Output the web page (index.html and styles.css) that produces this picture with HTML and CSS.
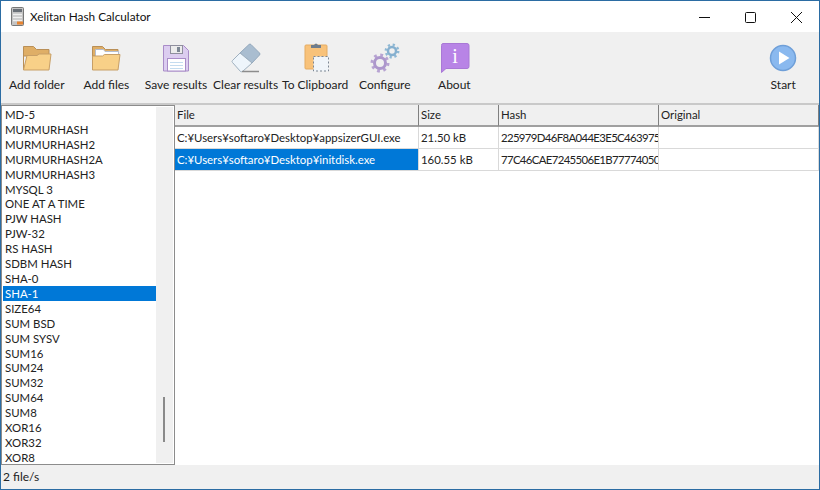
FILE: index.html
```html
<!DOCTYPE html>
<html lang="en">
<head>
    <meta charset="UTF-8">
    <title>Xelitan Hash Calculator</title>
    <link rel="stylesheet" href="styles.css">
</head>
<body>
    <div class="window">
        <div class="titlebar">
            <svg class="app-icon" width="13" height="19" viewBox="0 0 13 19">
                <rect x="0.5" y="0.5" width="12" height="18" rx="1" fill="#c4c4c4" stroke="#777"/>
                <rect x="2" y="2" width="9" height="3" fill="#6a7077"/>
                <path d="M2 7.5h9M2 10.5h9M2 13.5h9" stroke="#f0f0f0" stroke-width="1.4"/>
                <rect x="6" y="14.5" width="6" height="3" fill="#e8832f"/>
            </svg>
            <span class="title">Xelitan Hash Calculator</span>
            <div class="caption-buttons">
                <svg width="46" height="30" viewBox="0 0 46 30"><path d="M18 15.5h11" stroke="#111" fill="none"/></svg>
                <svg width="46" height="30" viewBox="0 0 46 30"><rect x="18.5" y="10.5" width="10" height="10" rx="1" stroke="#111" fill="none"/></svg>
                <svg width="46" height="30" viewBox="0 0 46 30"><path d="M18 10l11 11M29 10L18 21" stroke="#111" fill="none"/></svg>
            </div>
        </div>

        <div class="toolbar">
            <div class="tool">
                <svg width="32" height="32" viewBox="0 0 32 32">
                    <path d="M2.5 28V4.5h10l3 3h12.5V14H2.5z" fill="#dfae66" stroke="#b98f57"/>
                    <path d="M2.5 28L6 13.5h10l2-1.500h12L28 28z" fill="#f8d088" stroke="#c89f66"/>
                </svg>
                <span>Add folder</span>
            </div>
            <div class="tool">
                <svg width="32" height="32" viewBox="0 0 32 32">
                    <path d="M2.5 28V4.5h10l3 3h12.5V14H2.5z" fill="#dfae66" stroke="#b98f57"/>
                    <path d="M5.5 7.5h8l1.500 2h13.500V15H5.500z" fill="#fff" stroke="#b3bdd0"/>
                    <path d="M2.500 28V14h10l2-1.500h15.500L28 28z" fill="#f8d088" stroke="#c89f66"/>
                </svg>
                <span>Add files</span>
            </div>
            <div class="tool">
                <svg width="32" height="32" viewBox="0 0 32 32">
                    <path d="M3.500 3.500h20l5 5v20.500h-25z" fill="#dccdf0" stroke="#a98cc8"/>
                    <rect x="10.500" y="3.500" width="12" height="8" fill="#ececec" stroke="#8f8f9e"/>
                    <rect x="17" y="5" width="3" height="5" fill="#7d8794"/>
                    <rect x="7.500" y="16.500" width="18" height="12.500" fill="#fff" stroke="#a98cc8"/>
                    <path d="M10 20.500h13M10 23.500h13M10 26.500h13" stroke="#c4dcef"/>
                </svg>
                <span>Save results</span>
            </div>
            <div class="tool">
                <svg width="32" height="32" viewBox="0 0 32 32">
                    <path d="M10 11L19 2.500q1-1 2 0l8.500 8.500q1 1 0 2L22 21z" fill="#a9bdd0" stroke="#93a8bc"/>
                    <path d="M2.500 18.500L10 11l12 10-9.500 8.500q-1 .5-2 0l-8-9q-1-1 0-2z" fill="#eef5fb" stroke="#9fb0bf"/>
                    <path d="M12 29.500h17" stroke="#8c8c8c" stroke-width="1.500"/>
                </svg>
                <span>Clear results</span>
            </div>
            <div class="tool">
                <svg width="32" height="32" viewBox="0 0 32 32">
                    <rect x="6" y="3" width="22" height="24" rx="1" fill="#f8c27a" stroke="#e5ac63"/>
                    <path d="M12 6V3h3q2-3 4 0h3v3z" fill="#6f7d8c"/>
                    <rect x="14.500" y="14.500" width="15" height="14.500" fill="#f0f5fa" stroke="#7d8794" stroke-dasharray="2 2"/>
                </svg>
                <span>To Clipboard</span>
            </div>
            <div class="tool">
                <svg width="32" height="32" viewBox="0 0 32 32" fill="none">
                    <circle cx="11" cy="21" r="8" stroke="#b7a3d2" stroke-width="3" stroke-dasharray="2.800 3.480"/>
                    <circle cx="11" cy="21" r="5.500" stroke="#ad97cc" stroke-width="3"/>
                    <circle cx="23" cy="9" r="6.200" stroke="#8fb8d4" stroke-width="2.500" stroke-dasharray="2.200 2.660"/>
                    <circle cx="23" cy="9" r="4" stroke="#86b0cf" stroke-width="2.500"/>
                </svg>
                <span>Configure</span>
            </div>
            <div class="tool">
                <svg width="32" height="32" viewBox="0 0 32 32">
                    <path d="M5 1.500h24q2 0 2 2v21q0 2-2 2H8l-4.500 4V3.500q0-2 1.500-2z" fill="#b884e6" stroke="#a978d6"/>
                    <text x="17" y="21" text-anchor="middle" class="info-glyph">i</text>
                </svg>
                <span>About</span>
            </div>
            <div class="tool tool-start">
                <svg width="32" height="32" viewBox="0 0 32 32">
                    <circle cx="16" cy="16" r="12.500" fill="#8ab9ef" stroke="#6f9fd8" stroke-width="1.500"/>
                    <path d="M12 9.500l10.500 6.500-10.500 6.500z" fill="#fff"/>
                </svg>
                <span>Start</span>
            </div>
        </div>

        <div class="main">
            <div class="hash-list">
                <div class="hash-items">
                    <div>MD-5</div>
                    <div>MURMURHASH</div>
                    <div>MURMURHASH2</div>
                    <div>MURMURHASH2A</div>
                    <div>MURMURHASH3</div>
                    <div>MYSQL 3</div>
                    <div>ONE AT A TIME</div>
                    <div>PJW HASH</div>
                    <div>PJW-32</div>
                    <div>RS HASH</div>
                    <div>SDBM HASH</div>
                    <div>SHA-0</div>
                    <div class="selected">SHA-1</div>
                    <div>SIZE64</div>
                    <div>SUM BSD</div>
                    <div>SUM SYSV</div>
                    <div>SUM16</div>
                    <div>SUM24</div>
                    <div>SUM32</div>
                    <div>SUM64</div>
                    <div>SUM8</div>
                    <div>XOR16</div>
                    <div>XOR32</div>
                    <div>XOR8</div>
                </div>
                <div class="scrollbar"><div class="thumb"></div></div>
            </div>
            <div class="file-table">
                <div class="row head">
                    <div class="cell">File</div>
                    <div class="cell">Size</div>
                    <div class="cell">Hash</div>
                    <div class="cell">Original</div>
                </div>
                <div class="row">
                    <div class="cell">C:¥Users¥softaro¥Desktop¥appsizerGUI.exe</div>
                    <div class="cell">21.50 kB</div>
                    <div class="cell hash">225979D46F8A044E3E5C463975</div>
                    <div class="cell"></div>
                </div>
                <div class="row">
                    <div class="cell selected">C:¥Users¥softaro¥Desktop¥initdisk.exe</div>
                    <div class="cell">160.55 kB</div>
                    <div class="cell hash">77C46CAE7245506E1B77774050</div>
                    <div class="cell"></div>
                </div>
            </div>
        </div>

        <div class="statusbar">2 file/s</div>
    </div>
</body>
</html>
```

FILE: styles.css
```css
html, body {
    margin: 0;
    padding: 0;
    font-family: "Lato", "Open Sans", sans-serif;
    font-size: 12px;
    color: #222;
}
.window {
    width: 820px;
    height: 490px;
    box-sizing: border-box;
    border: 1px solid #2b6ca3;
    display: flex;
    flex-direction: column;
    background: #f0f0f0;
    overflow: hidden;
}
.titlebar {
    height: 31px;
    flex: none;
    background: #fff;
    display: flex;
    align-items: center;
    padding-left: 10px;
}
.app-icon {
    margin-right: 6px;
}
.title {
    color: #111;
    font-size: 11.8px;
}
.caption-buttons {
    margin-left: auto;
    display: flex;
}
.caption-buttons svg {
    display: block;
}
.toolbar {
    height: 71px;
    flex: none;
    display: flex;
    padding-left: 1px;
    border-bottom: 2px solid #c9c9c9;
    box-sizing: content-box;
}
.tool {
    width: 69.6px;
    display: flex;
    flex-direction: column;
    align-items: center;
    padding-top: 10px;
    white-space: nowrap;
}
.tool span {
    margin-top: 3px;
}
.tool-start {
    margin-left: auto;
    margin-right: 1px;
}
.info-glyph {
    font-family: "Liberation Serif", serif;
    font-size: 20px;
    fill: #fff;
}
.main {
    flex: 1;
    display: flex;
    min-height: 0;
}
.hash-list {
    width: 174px;
    box-sizing: border-box;
    border: 1px solid #8c8c8c;
    background: #fff;
    display: flex;
    padding: 1px;
    overflow: hidden;
    font-size: 11.4px;
}
.hash-items {
    flex: 1;
}
.hash-items div {
    height: 14.92px;
    line-height: 15px;
    padding-left: 2px;
}
.hash-items .selected {
    background: #0078d7;
    color: #fff;
}
.scrollbar {
    width: 17px;
    background: #f0f0f0;
    position: relative;
}
.thumb {
    position: absolute;
    left: 7px;
    top: 290px;
    width: 2px;
    height: 45px;
    background: #8a8a8a;
}
.file-table {
    flex: 1;
    background: #fff;
    overflow: hidden;
    font-size: 11.4px;
}
.row {
    display: grid;
    grid-template-columns: 244px 80px 160px 160px;
    height: 22px;
}
.cell {
    overflow: hidden;
    white-space: nowrap;
    line-height: 21px;
    padding-left: 2px;
    box-sizing: border-box;
    border-right: 1px solid #d9d9d9;
    border-bottom: 1px solid #d9d9d9;
}
.cell.hash {
    letter-spacing: -0.65px;
}
.cell.selected {
    background: #0078d7;
    color: #fff;
}
.head {
    height: 22px;
    background: #f0f0f0;
}
.head .cell {
    line-height: 20px;
    border-bottom: 2px solid #a0a0a0;
    border-right: 1px solid #808080;
}
.statusbar {
    height: 24px;
    flex: none;
    line-height: 24px;
    padding-left: 2px;
}
```
